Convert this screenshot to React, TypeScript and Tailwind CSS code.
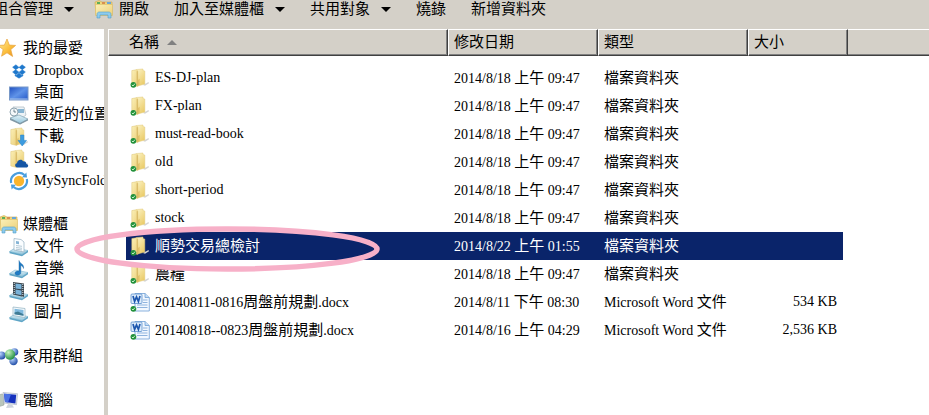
import { Fragment } from "react";
import type { ReactNode } from "react";
import clsx from "clsx";

const toolbarItems = [
  { label: "組合管理", menu: true },
  { label: "開啟", icon: true },
  { label: "加入至媒體櫃", menu: true },
  { label: "共用對象", menu: true },
  { label: "燒錄" },
  { label: "新增資料夾" },
];

const files = [
  { name: "ES-DJ-plan", date: "2014/8/18 上午 09:47", type: "檔案資料夾", size: "" },
  { name: "FX-plan", date: "2014/8/18 上午 09:47", type: "檔案資料夾", size: "" },
  { name: "must-read-book", date: "2014/8/18 上午 09:47", type: "檔案資料夾", size: "" },
  { name: "old", date: "2014/8/18 上午 09:47", type: "檔案資料夾", size: "" },
  { name: "short-period", date: "2014/8/18 上午 09:47", type: "檔案資料夾", size: "" },
  { name: "stock", date: "2014/8/18 上午 09:47", type: "檔案資料夾", size: "" },
  { name: "順勢交易總檢討", date: "2014/8/22 上午 01:55", type: "檔案資料夾", size: "", selected: true },
  { name: "農糧", date: "2014/8/18 上午 09:47", type: "檔案資料夾", size: "" },
  { name: "20140811-0816周盤前規劃.docx", date: "2014/8/11 下午 08:30", type: "Microsoft Word 文件", size: "534 KB" },
  { name: "20140818--0823周盤前規劃.docx", date: "2014/8/16 上午 04:29", type: "Microsoft Word 文件", size: "2,536 KB" },
];

const Icon = ({ children }: { children: ReactNode }) => (
  <svg viewBox="0 0 20 20" className="size-5 shrink-0" aria-hidden="true">
    {children}
  </svg>
);

// Shared gradients, referenced by id from every icon
const Gradients = () => (
  <svg className="absolute size-0" aria-hidden="true">
    <defs>
      <linearGradient id="gold" x1="0" y1="0" x2="0.6" y2="1">
        <stop offset="0" stopColor="#fcf3c4" />
        <stop offset="1" stopColor="#ebcd6c" />
      </linearGradient>
      <linearGradient id="pale" x1="0" y1="0" x2="1" y2="1">
        <stop offset="0" stopColor="#fbf0b8" />
        <stop offset="1" stopColor="#ecd07a" />
      </linearGradient>
      <linearGradient id="star" x1="0" y1="0" x2="1" y2="1">
        <stop offset="0" stopColor="#fff0a0" />
        <stop offset="0.6" stopColor="#fbbd3a" />
        <stop offset="1" stopColor="#e88a1a" />
      </linearGradient>
      <linearGradient id="screen" x1="0" y1="0" x2="1" y2="1">
        <stop offset="0" stopColor="#1f4fc0" />
        <stop offset="0.5" stopColor="#5f93e8" />
        <stop offset="1" stopColor="#2458c8" />
      </linearGradient>
      <linearGradient id="tray" x1="0" y1="0" x2="0" y2="1">
        <stop offset="0" stopColor="#e2f2f8" />
        <stop offset="1" stopColor="#8fc3da" />
      </linearGradient>
      <radialGradient id="blueBall" cx="0.35" cy="0.3" r="0.7">
        <stop offset="0" stopColor="#b8d4ff" />
        <stop offset="1" stopColor="#2450a8" />
      </radialGradient>
      <radialGradient id="greenBall" cx="0.35" cy="0.3" r="0.7">
        <stop offset="0" stopColor="#c8f5c0" />
        <stop offset="1" stopColor="#2a9348" />
      </radialGradient>
    </defs>
  </svg>
);

const FolderShape = () => (
  <>
    <path d="M13 17l5.5-3 .5 1.2-4 2.6z" fill="#d4d4d4" />
    <path d="M6.5 1.5l6.5-.5v1.5l1.8.6v13L7.5 18z" fill="url(#gold)" stroke="#e0c878" strokeWidth="0.5" />
    <path d="M1.8 2.6l4.7-.9 1.2 1.2V18.5L1.8 17z" fill="url(#pale)" stroke="#dcc272" strokeWidth="0.5" />
    <path d="M7.2 3.2v14.6" stroke="#d3b05a" strokeWidth="0.9" />
    <path d="M8 12l1.6-1.2v6L8 18z" fill="#e2c268" />
  </>
);

const SyncedBadge = () => (
  <>
    <circle cx="3.4" cy="16.8" r="2.9" fill="#23913c" />
    <path d="M1.9 16.9l1.1 1.1 2-2.4" fill="none" stroke="#d8f8d8" strokeWidth="0.9" />
  </>
);

const FolderIcon = () => (
  <Icon>
    <FolderShape />
    <SyncedBadge />
  </Icon>
);

const WordIcon = () => (
  <Icon>
    <path d="M5 1.5h10l4.3 4V19H5z" fill="#f2f8ff" stroke="#6f9fd4" strokeWidth="0.8" />
    <path d="M15 1.5v4h4.3" fill="#c4dcf5" stroke="#6f9fd4" strokeWidth="0.8" />
    <path d="M13 8h4.5M13 10.5h4.5M7 13h10.5M7 15.5h10.5" stroke="#8fb4de" />
    <rect x="1" y="2" width="11" height="9.5" rx="1" fill="#dcebfb" stroke="#5a8fcc" strokeWidth="0.8" />
    <path d="M3 4l1.6 5.4L6.5 5l1.9 4.4L10 4" fill="none" stroke="#1d57ae" strokeWidth="1.7" />
    <SyncedBadge />
  </Icon>
);

const LibraryIcon = () => (
  <Icon>
    <path d="M1 3l4-1.5L8 3h10v13H2z" fill="#f0d67c" stroke="#cfaa4e" strokeWidth="0.6" />
    <path d="M3 3h3v2H3z" fill="#5dae5a" />
    <path d="M8 3h3v2H8z" fill="#d98f50" />
    <path d="M13 3h4v2h-4z" fill="#68a6d8" />
    <path d="M1.5 5.5h17v11h-17z" fill="url(#pale)" stroke="#d9b95f" strokeWidth="0.5" />
    <path d="M3 19v-3.5c0-1.6.8-2.5 2.5-2.5h9c1.7 0 2.5.9 2.5 2.5V19h-3v-3H6v3z" fill="#8dcbed" stroke="#4f9ec9" strokeWidth="0.6" />
  </Icon>
);

const StarIcon = () => (
  <Icon>
    <path d="M8 1l2.4 6.1 6.2.3-4.8 4.2 1.8 6.9L8 14.8l-5.4 3.4 1.5-6.6L-1 7.4l6.4-.3z" fill="url(#star)" stroke="#e7a33d" strokeWidth="0.7" />
  </Icon>
);

const DropboxIcon = () => (
  <Icon>
    <path
      d="M6.9 3.8L10 6.4 6.7 8.7 3.6 6.2zM13.1 3.8l3.3 2.4-3.1 2.5L10 6.4zM3.6 11l3.1-2.3L10 11.2l-3.1 2.6zM13.3 8.7l3.1 2.3-3.3 2.8-3.1-2.6zM6 13.8l1 .8 3-2.5 3 2.5 1-.8v1L10 17.2l-4-2.4z"
      fill="#1f78cc"
      stroke="#1f78cc"
      strokeWidth="0.5"
    />
  </Icon>
);

const DesktopIcon = () => (
  <Icon>
    <rect x="0.5" y="4" width="18.5" height="13" fill="url(#screen)" stroke="#7898c8" />
    <path d="M1 15.5h17.5v1H1z" fill="#a8c4ec" />
  </Icon>
);

const RecentIcon = () => (
  <Icon>
    <path d="M4 2h11l2 8-4 3H4z" fill="#eef3f6" stroke="#a9b8c0" strokeWidth="0.7" />
    <path d="M9 4h6v4H9z" fill="#86b4d2" />
    <circle cx="5" cy="7" r="4" fill="#f4f8fa" stroke="#8fa4b0" />
    <path d="M5 4.5V7h2" fill="none" stroke="#4c6575" strokeWidth="0.8" />
    <path d="M1 13l9-3 9 4-8 5z" fill="url(#tray)" stroke="#7198aa" strokeWidth="0.6" />
    <path d="M1 13v2l10 4.5 8-4v-1.5l-8 4z" fill="#8299a6" />
  </Icon>
);

const DownloadIcon = () => (
  <Icon>
    <FolderShape />
    <path d="M11.5 8h3.4v5.4h2.6L13.2 19 9 13.4h2.5z" fill="#3d9be0" stroke="#1e82cb" strokeWidth="0.5" />
  </Icon>
);

const SkyDriveIcon = () => (
  <Icon>
    <FolderShape />
    <path d="M8.5 18.5c-2.8 0-3.2-3.8-.5-4.2.2-3.3 4.4-4.8 6-2 2.4-.5 3.5 1.2 3.4 2.6 2.6.5 2.3 3.6-.2 3.6z" fill="#1455a4" />
  </Icon>
);

const SyncIcon = () => (
  <Icon>
    <circle cx="10" cy="10" r="5.2" fill="#fbb52c" />
    <path d="M2.2 12A8.2 8.2 0 0 1 15.5 4M17.8 8A8.2 8.2 0 0 1 4.5 16" fill="none" stroke="#4a9ede" strokeWidth="2.2" />
    <path d="M13 6.2l5 .4-.6-5zM7 13.8l-5-.4.6 5z" fill="#4a9ede" />
  </Icon>
);

const Tray = () => (
  <>
    <path d="M0.5 14.5L6 11l13 2.5-6 4z" fill="url(#tray)" stroke="#79b4ce" strokeWidth="0.6" />
    <path d="M0.5 14.5l12.5 3 6-4v1.8l-6 3.9L.5 16.2z" fill="#5fa5c6" />
  </>
);

const DocumentsIcon = () => (
  <Icon>
    <Tray />
    <path d="M5 1.5l7 1 3 2.5v10L5 13z" fill="#fafdff" stroke="#93afc0" strokeWidth="0.7" />
    <path d="M7 8.5l6 .8M7 10.5l6 .8M7 12.2l6 .8" stroke="#a3bccb" strokeWidth="0.8" />
    <path d="M7 4l3 .4v2.8L7 6.8z" fill="#84b3d5" />
  </Icon>
);

const MusicIcon = () => (
  <Icon>
    <Tray />
    <path d="M10 1.5c.5 3 5.5 3.5 4.5 8-.5-2-1.5-2.6-2.7-3v7.3c0 3-5.8 3.3-5.8.5 0-1.9 2.3-2.6 4-2z" fill="#1f7bc4" stroke="#14609e" strokeWidth="0.4" />
  </Icon>
);

const VideosIcon = () => (
  <Icon>
    <Tray />
    <path d="M4 1l11 1.5V16L4 13.5z" fill="#3a454d" />
    <path d="M6.5 2.5l6 .8v4.9l-6-.8zM6.5 8.5l6 .9v4.8l-6-1.2z" fill="#79b2d8" />
    <path d="M5.2 2v11.5M13.8 3v12.5" stroke="#dce6eb" strokeWidth="1" strokeDasharray="1 1" />
  </Icon>
);

const PicturesIcon = () => (
  <Icon>
    <Tray />
    <path d="M4 4l12 1.5v9L4 12.5z" fill="#f5fafc" stroke="#8fb0c0" strokeWidth="0.7" />
    <path d="M5.5 5.8l9 1.2v5.7l-9-1.5z" fill="#7fb9de" />
    <path d="M5.5 11.2V9.6l3.5-1 5.5 2.6v1.5z" fill="#3f7b94" />
  </Icon>
);

const HomegroupIcon = () => (
  <Icon>
    <circle cx="2.5" cy="9.5" r="4" fill="url(#blueBall)" />
    <circle cx="15.5" cy="6" r="3.8" fill="url(#blueBall)" />
    <circle cx="14.5" cy="15" r="4.2" fill="url(#blueBall)" />
    <circle cx="11" cy="8.5" r="5.2" fill="url(#greenBall)" />
  </Icon>
);

const ComputerIcon = () => (
  <Icon>
    <path d="M-1 5l4-1 2 1v10l-6 2z" fill="#b9c6bb" stroke="#8a968c" strokeWidth="0.5" />
    <path d="M4 2.5l14.5 1.2-1 11L5 13z" fill="#dfe5ee" stroke="#a4adbd" strokeWidth="0.6" />
    <path d="M5 3.7l12.2 1-.8 8.7L6 12z" fill="#1531bd" />
    <path d="M5 3.7l7 .6-3 8.1L6 12z" fill="#4a71e4" />
    <path d="M9 14l4 .5 2 3-8 .5z" fill="#cdd3dc" />
  </Icon>
);

const sidebarGroups = [
  {
    title: "我的最愛",
    icon: <StarIcon />,
    items: [
      { label: "Dropbox", icon: <DropboxIcon /> },
      { label: "桌面", icon: <DesktopIcon /> },
      { label: "最近的位置", icon: <RecentIcon /> },
      { label: "下載", icon: <DownloadIcon /> },
      { label: "SkyDrive", icon: <SkyDriveIcon /> },
      { label: "MySyncFolder", icon: <SyncIcon /> },
    ],
  },
  {
    title: "媒體櫃",
    icon: <LibraryIcon />,
    items: [
      { label: "文件", icon: <DocumentsIcon /> },
      { label: "音樂", icon: <MusicIcon /> },
      { label: "視訊", icon: <VideosIcon /> },
      { label: "圖片", icon: <PicturesIcon /> },
    ],
  },
  { title: "家用群組", icon: <HomegroupIcon />, items: [] },
  { title: "電腦", icon: <ComputerIcon />, items: [] },
];

// Latin runs are set one pixel smaller than the Chinese ones
const Label = ({ text }: { text: string }) => (
  <span className="whitespace-pre">
    {text.split(/([\u4e00-\u9fff]+)/).map((part, index) =>
      index % 2 ? (
        <span key={index} className="text-[15px]">
          {part}
        </span>
      ) : (
        <Fragment key={index}>{part}</Fragment>
      )
    )}
  </span>
);

const HeaderCell = ({ label, first, sorted }: { label: string; first?: boolean; sorted?: boolean }) => (
  <th
    colSpan={first ? 2 : 1}
    aria-sort={sorted ? "ascending" : undefined}
    className="h-[27px] border border-t-white border-l-white border-r-[#404040] border-b-[#404040] bg-[#d4d0c8] p-0 font-normal shadow-[inset_-1px_-1px_0_#808080]"
  >
    <button type="button" className={clsx("flex w-full items-center gap-2", first ? "pl-5" : "pl-[5px]")}>
      <Label text={label} />
      {sorted && (
        <svg viewBox="0 0 10 5" className="h-[5px] w-2.5" aria-hidden="true">
          <path d="M5 0l5 5H0z" fill="#808080" />
        </svg>
      )}
    </button>
  </th>
);

const App = () => {
  return (
    <div className="relative flex min-h-screen flex-col overflow-hidden bg-[#d4d0c8] font-['Liberation_Serif','Noto_Sans_CJK_TC',serif] text-sm leading-4 text-black">
      <Gradients />

      {/* Toolbar */}
      <header className="-ml-3 flex h-[29px] items-start gap-5 whitespace-nowrap">
        {toolbarItems.map((item) => (
          <button
            key={item.label}
            type="button"
            className={clsx("flex h-[18px] items-center", item.icon ? "gap-[5px]" : "gap-[11px] pl-[5px]")}
          >
            {item.icon && <LibraryIcon />}
            <Label text={item.label} />
            {item.menu && (
              <svg viewBox="0 0 10 5" className="h-[5px] w-2.5" aria-hidden="true">
                <path d="M0 0h10L5 5z" fill="#000" />
              </svg>
            )}
          </button>
        ))}
      </header>

      <div className="flex flex-1">
        {/* Navigation pane */}
        <nav className="flex w-[104px] shrink-0 flex-col gap-[22px] overflow-hidden bg-white pt-2">
          {sidebarGroups.map((group) => (
            <div key={group.title}>
              <a href="#" className="-ml-px flex h-[22px] items-center gap-1">
                {group.icon}
                <Label text={group.title} />
              </a>
              {group.items.map((item) => (
                <a key={item.label} href="#" className="flex h-[22px] items-center gap-[5px] pt-px pl-[9px]">
                  {item.icon}
                  <Label text={item.label} />
                </a>
              ))}
            </div>
          ))}
        </nav>

        {/* File list */}
        <main className="ml-1 min-w-0 flex-1 bg-white">
          <table className="w-full table-fixed border-separate border-spacing-0 text-left">
            <colgroup>
              <col className="w-[18px]" />
              <col className="w-[322px]" />
              <col className="w-[150px]" />
              <col className="w-[150px]" />
              <col className="w-[100px]" />
              <col />
            </colgroup>
            <thead>
              <tr>
                <HeaderCell label="名稱" first sorted />
                <HeaderCell label="修改日期" />
                <HeaderCell label="類型" />
                <HeaderCell label="大小" />
                <td className="border-y border-t-white border-b-[#404040] bg-[#d4d0c8] shadow-[inset_0_-1px_0_#808080]" />
              </tr>
            </thead>
            <tbody className="before:block before:h-2 before:content-['']">
              {files.map((file) => {
                const fill = file.selected && "bg-[#0a246a] text-white";
                return (
                  <tr key={file.name} className="h-7">
                    <td className="p-0" />
                    <td className={clsx("p-0 pl-1", fill)}>
                      <div className="flex items-center gap-[5px]">
                        {file.name.endsWith(".docx") ? <WordIcon /> : <FolderIcon />}
                        <Label text={file.name} />
                      </div>
                    </td>
                    <td className={clsx("p-0 pl-1.5", fill)}>
                      <Label text={file.date} />
                    </td>
                    <td className={clsx("p-0 pl-1.5", fill)}>
                      <Label text={file.type} />
                    </td>
                    <td className="p-0">
                      <div className={clsx("mr-[5px] flex h-7 items-center justify-end pr-1.5", fill)}>
                        <Label text={file.size} />
                      </div>
                    </td>
                    <td className="p-0" />
                  </tr>
                );
              })}
            </tbody>
          </table>
        </main>
      </div>

      {/* Hand-drawn ring round the selected folder */}
      <svg viewBox="0 0 306 46" className="pointer-events-none absolute top-[226px] left-[74px] h-[46px] w-[306px]" aria-hidden="true">
        <ellipse cx="153" cy="23" rx="150" ry="20" fill="none" stroke="#f7b0c8" strokeWidth="5.5" />
      </svg>
    </div>
  );
};

export default App;
